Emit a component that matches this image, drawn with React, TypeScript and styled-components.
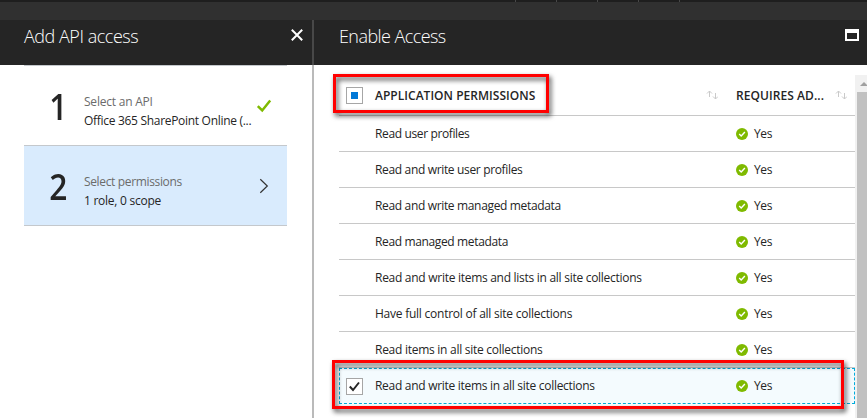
import React from "react";
import styled, { createGlobalStyle } from "styled-components";

const Global = createGlobalStyle`
  * { box-sizing: border-box; }
  body { margin: 0; background: #fff; color: #252525; overflow: hidden;
    font-family: "Open Sans", "Noto Sans", sans-serif; font-size: 12px; }
`;

const Page = styled.div`
  position: relative;
  width: 867px;
  height: 418px;
  overflow: hidden;
  display: flex;
  flex-direction: column;
  background: #fff;
`;
const TopBar = styled.div`
  height: 2px;
  flex: none;
  background: #1e1e1e;
  padding-left: 515px;
  display: flex;
  gap: 40px;
`;
const Tick = styled.i`
  width: 1px;
  height: 2px;
  background: #484848;
`;
const SubBar = styled.div`
  height: 18px;
  flex: none;
  background: #303030;
`;
const Blades = styled.div`
  flex: 1;
  display: flex;
  min-height: 0;
`;
const Blade = styled.section<{ $width: number }>`
  width: ${(p) => p.$width}px;
  display: flex;
  flex-direction: column;
`;
const Divider = styled.div`
  width: 2px;
  background: linear-gradient(#484848 45px, #bababa 45px);
`;
const BladeHeader = styled.header<{ $left: number; $right: number }>`
  height: 45px;
  flex: none;
  background: #252525;
  display: flex;
  justify-content: space-between;
  padding: 0 ${(p) => p.$right}px 0 ${(p) => p.$left}px;
`;
const Title = styled.h1<{ $track: number }>`
  margin: 3px 0 0;
  font-size: 18px;
  line-height: 26px;
  font-weight: 300;
  color: #fff;
  white-space: nowrap;
  letter-spacing: ${(p) => p.$track}px;
`;
const HeaderIcon = styled.svg`
  flex: none;
  margin-top: 9px;
`;
const Steps = styled.div`
  width: 263px;
  margin-left: 24px;
`;
const Step = styled.div<{ $active?: boolean }>`
  height: 80px;
  border-top: 1px solid #c4c8cc;
  background: ${(p) => (p.$active ? "#d9ebfd" : "#fff")};
  ${(p) => p.$active && "border-bottom: 1px solid #c4c8cc; height: 81px;"}
  display: flex;
  padding-left: 24px;
`;
const StepNumber = styled.div`
  width: 36px;
  padding-top: 17px;
  font-size: 36px;
  line-height: 48px;
  font-weight: 600;
  transform: scaleX(0.88);
  transform-origin: 10px 0;
`;
const StepText = styled.div`
  width: 170px;
  padding-top: 26px;
`;
const Line = styled.div<{ $track: number; $muted?: boolean }>`
  line-height: 19px;
  white-space: nowrap;
  letter-spacing: ${(p) => p.$track}px;
  color: ${(p) => (p.$muted ? "#6b6b6b" : "#252525")};
`;
const StepIcon = styled.svg`
  margin: 32px 0 0 2px;
  flex: none;
`;
const TableArea = styled.div`
  flex: 1;
  display: flex;
  padding: 10px 0 0 25px;
  min-height: 0;
`;
const Table = styled.div`
  width: 516px;
  flex: none;
`;
const Row = styled.div<{ $head?: boolean; $selected?: boolean }>`
  height: ${(p) => (p.$head ? 41 : 36)}px;
  display: grid;
  grid-template-columns: 36px 361px 119px;
  align-items: center;
  border-bottom: 1px solid #c8c8c8;
  ${(p) => p.$selected && "border: 1px dashed #00abdb; background: #f4fbfe; grid-template-columns: 35px 361px 118px;"}
  ${(p) => p.$head && "font-weight: 600;"}
`;
const CheckCell = styled.div<{ $inset: number }>`
  padding-left: ${(p) => p.$inset}px;
  display: flex;
`;
const Box = styled.span`
  width: 17px;
  height: 17px;
  border: 1px solid #a6a6a6;
  background: #fff;
  display: flex;
  align-items: center;
  justify-content: center;
`;
const Partial = styled.span`
  width: 7px;
  height: 7px;
  background: #0078d7;
`;
const Cell = styled.div`
  display: flex;
  align-items: center;
`;
const HeadCell = styled(Cell)<{ $right: number }>`
  justify-content: space-between;
  padding-top: 2px;
  padding-right: ${(p) => p.$right}px;
`;
const Name = styled.span<{ $track: number }>`
  line-height: 18px;
  white-space: nowrap;
  letter-spacing: ${(p) => p.$track}px;
`;
const Status = styled(Cell)`
  gap: 6px;
`;
const Scrollbar = styled.div`
  width: 12px;
  background: #f1f1f1;
  padding-left: 2px;
  display: flex;
  flex-direction: column;
`;
const ScrollArrow = styled.svg`
  height: 17px;
  width: 10px;
  flex: none;
`;
const Thumb = styled.div`
  flex: 1;
  background: #c1c1c1;
`;
const Highlight = styled.div<{ $x: number; $y: number; $w: number; $h: number }>`
  position: absolute;
  left: ${(p) => p.$x}px;
  top: ${(p) => p.$y}px;
  width: ${(p) => p.$w}px;
  height: ${(p) => p.$h}px;
  border: 3px solid #f00;
  filter: drop-shadow(2px 3px 2.5px rgba(0, 0, 0, 0.75));
  pointer-events: none;
`;

const SortArrows = styled.svg`
  flex: none;
  margin-bottom: 2px;
`;
const SortIcon = () => (
  <SortArrows width="12" height="10" viewBox="0 0 12 10" fill="none" stroke="#cacaca">
    <path d="M3.500 1v6M1 3.500L3.500 1 6 3.500M9.500 3v6M7 6.500L9.500 9 12 6.500" />
  </SortArrows>
);
const YesIcon = () => (
  <svg width="12" height="12" viewBox="0 0 12 12">
    <circle cx="6" cy="6" r="6" fill="#7fba00" />
    <path d="M3.200 6l2 2 3.700-4" fill="none" stroke="#fff" strokeWidth="1.400" />
  </svg>
);

const rows: [string, number][] = [
  ["Read user profiles", -0.37],
  ["Read and write user profiles", -0.34],
  ["Read and write managed metadata", -0.34],
  ["Read managed metadata", -0.36],
  ["Read and write items and lists in all site collections", -0.28],
  ["Have full control of all site collections", -0.24],
  ["Read items in all site collections", -0.27],
  ["Read and write items in all site collections", -0.29],
];

export default function App() {
  return (
    <Page>
      <Global />
      <TopBar>
        <Tick /><Tick /><Tick /><Tick /><Tick />
      </TopBar>
      <SubBar />
      <Blades>
        <Blade $width={312}>
          <BladeHeader $left={24} $right={9}>
            <Title $track={-0.47}>Add API access</Title>
            <HeaderIcon width="12" height="12" viewBox="0 0 12 12">
              <path d="M.8.8l10.400 10.400M11.200.8L.8 11.200" stroke="#fff" strokeWidth="2" />
            </HeaderIcon>
          </BladeHeader>
          <Steps>
            <Step>
              <StepNumber>1</StepNumber>
              <StepText>
                <Line $muted $track={-0.22}>Select an API</Line>
                <Line $track={-0.3}>Office 365 SharePoint Online (...</Line>
              </StepText>
              <StepIcon width="16" height="16" viewBox="0 0 16 16" fill="none">
                <path d="M1.800 8.200l4.400 4.300 8-10" stroke="#7fba00" strokeWidth="2.500" />
              </StepIcon>
            </Step>
            <Step $active>
              <StepNumber>2</StepNumber>
              <StepText>
                <Line $muted $track={-0.35}>Select permissions</Line>
                <Line $track={-0.26}>1 role, 0 scope</Line>
              </StepText>
              <StepIcon width="16" height="16" viewBox="0 0 16 16" fill="none">
                <path d="M4.300 1.300l7 6.700-7 6.700" stroke="#333" strokeWidth="1.200" />
              </StepIcon>
            </Step>
          </Steps>
        </Blade>
        <Divider />
        <Blade $width={553}>
          <BladeHeader $left={25} $right={8}>
            <Title $track={-0.57}>Enable Access</Title>
            <HeaderIcon width="14" height="12" viewBox="0 0 14 12">
              <path d="M0 0h14v12H0zM2 4v6h10V4z" fill="#fff" fillRule="evenodd" />
            </HeaderIcon>
          </BladeHeader>
          <TableArea>
            <Table>
              <Row $head>
                <CheckCell $inset={7}><Box><Partial /></Box></CheckCell>
                <HeadCell $right={18}>
                  <Name $track={0.03}>APPLICATION PERMISSIONS</Name>
                  <SortIcon />
                </HeadCell>
                <HeadCell $right={8}>
                  <Name $track={0.07}>REQUIRES AD...</Name>
                  <SortIcon />
                </HeadCell>
              </Row>
              {rows.map(([name, track], i) => {
                const selected = i === rows.length - 1;
                return (
                  <Row key={name} $selected={selected}>
                    <CheckCell $inset={6}>
                      {selected && (
                        <Box>
                          <svg width="13" height="13" viewBox="0 0 13 13" fill="none">
                            <path d="M1.800 6.500l3.200 3.500 6-7.500" stroke="#252525" strokeWidth="2" />
                          </svg>
                        </Box>
                      )}
                    </CheckCell>
                    <Cell><Name $track={track}>{name}</Name></Cell>
                    <Status><YesIcon /><Name $track={-0.4}>Yes</Name></Status>
                  </Row>
                );
              })}
            </Table>
            <Scrollbar>
              <ScrollArrow viewBox="0 0 10 17"><path d="M3 11l4-4 4 4z" fill="#a0a0a0" /></ScrollArrow>
              <Thumb />
            </Scrollbar>
          </TableArea>
        </Blade>
      </Blades>
      <Highlight $x={333} $y={74} $w={216} $h={39} />
      <Highlight $x={332} $y={360} $w={512} $h={49} />
    </Page>
  );
}
